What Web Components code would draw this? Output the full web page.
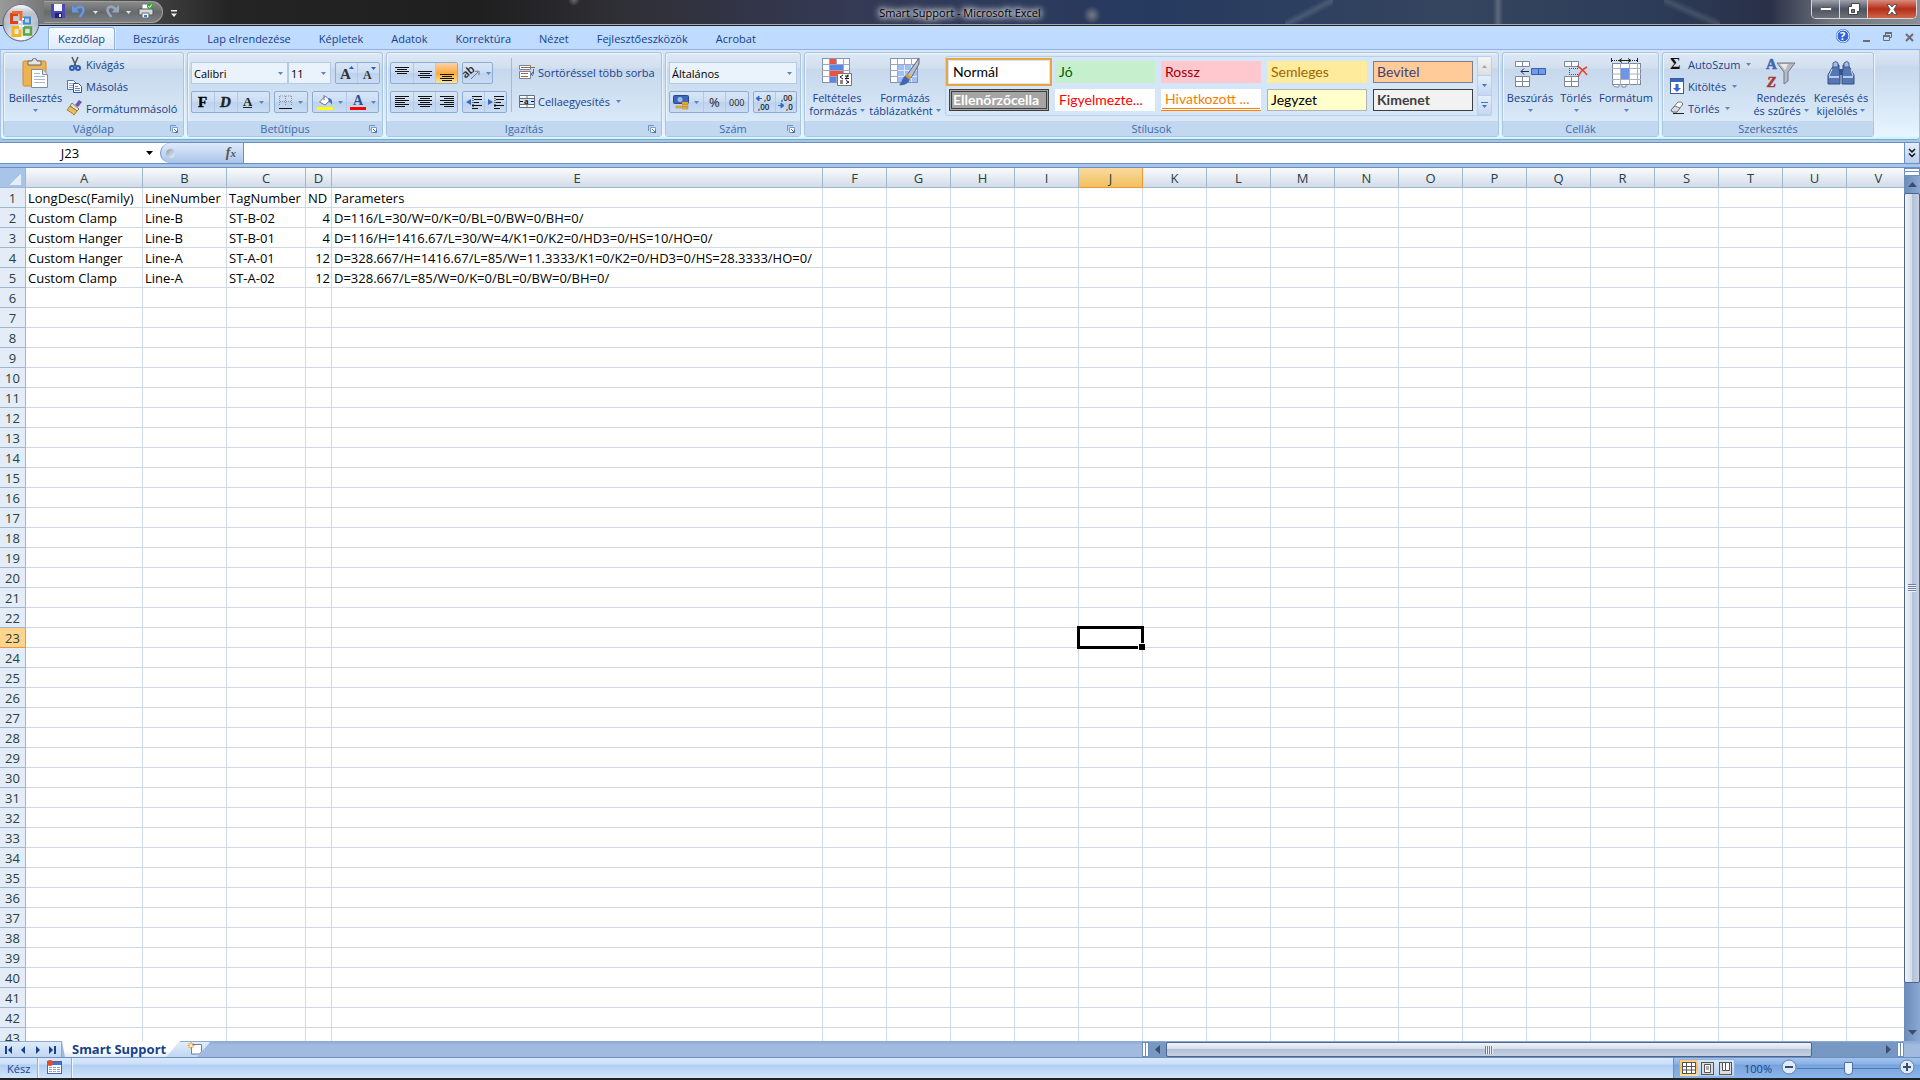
<!DOCTYPE html>
<html lang="hu">
<head>
<meta charset="utf-8">
<title>Smart Support - Microsoft Excel</title>
<style>
html, body {
  margin: 0;
  height: 100%;
  overflow: hidden;
}
body {
  --ui: "Open Sans", "Noto Sans", sans-serif;
  --style: Lato, "Liberation Sans", sans-serif;
  --ink: #15428b;
  font-family: var(--ui);
  font-size: 11px;
  color: var(--ink);
}
</style>
</head>
<body>
<excel-window>
  <title-bar slot="title">Smart Support - Microsoft Excel</title-bar>
  <ribbon-tabs slot="tabs"></ribbon-tabs>
  <ribbon-bar slot="ribbon"></ribbon-bar>
  <formula-bar slot="formula" cell="J23"></formula-bar>
  <sheet-grid rows="43" active="J23"></sheet-grid>
  <sheet-tabs slot="sheets">Smart Support</sheet-tabs>
  <status-bar slot="status">Kész</status-bar>
</excel-window>

<script>
const RESET = `
:host, * { box-sizing: border-box; }
button, input, select {
  margin: 0;
  padding: 0;
  border: 0;
  background: none;
  border-radius: 0;
  font: inherit;
  color: inherit;
  outline: 0 none;
  appearance: none;
}
`;

// name: [width, height, svg content]
const GRID = `<rect x=".5" y=".5" width="27" height="24" fill="#fdfdff" stroke="#8594ad"/>
  <path d="M.5 6.5h27M.5 12.5h27M.5 18.5h27M7.500.5v24M14.500.5v24M21.500.5v24" stroke="#9aa8c0" fill="none"/>`;
const ICONS = {
  down: [5, 3, '<path d="M0 0h5L2.500 3z" fill="currentColor"/>'],
  namedown: [7, 4, '<path d="M0 0h7L3.500 4z" fill="#000"/>'],
  save: [14, 14, '<path d="M0 0h14v14H1.500L0 12.500z" fill="#4b47b4"/><path d="M3 0h8v7H3z" fill="#f3f4ff"/><path d="M4 9h7v5H4z" fill="#23236d"/><path d="M8 10h2v3H8z" fill="#e8ecff"/>'],
  undo: [14, 14, '<path d="M3 6C6 1 12 2 11.500 6.500 11.200 9.500 9 11 7.500 13" fill="none" stroke="#6496ea" stroke-width="2.500"/><path d="M0 1v7.500h7.500z" fill="#6496ea"/>'],
  redo: [14, 14, '<path d="M11 6C8 1 2 2 2.500 6.500 2.800 9.500 5 11 6.500 13" fill="none" stroke="#98a6bd" stroke-width="2.500"/><path d="M14 1v7.500H6.500z" fill="#98a6bd"/>'],
  print: [16, 16, '<path d="M4 1h7v6H4z" fill="#fff" stroke="#777"/><path d="M1 6h14v6H1z" fill="#d5d8dd" stroke="#555"/><path d="M4 10h7v5H4z" fill="#eef5ff" stroke="#666"/><path d="M6 12h3v2H6z" fill="#3b82c8"/><circle cx="12" cy="3" r="3" fill="#3aa335"/><path d="M10.300 3l1.400 1.500 2-3" stroke="#fff" fill="none"/>'],
  qat: [6, 7, '<path d="M0 0h6v1.500H0zM0 3.500h6L3 7z" fill="#e8eefa"/>'],
  paste: [27, 30, '<rect x="1" y="3" width="23" height="25" rx="1.500" fill="#edb350" stroke="#c98d35"/><path d="M6 3h4q0-2.500 2.500-2.500T15 3h4v4H6z" fill="#e4e4e4" stroke="#666"/><path d="M9.500 11.500h11l5 5v13h-16z" fill="#fff" stroke="#7b8ca6"/><path d="M20.500 11.500v5h5" fill="#dce6f4" stroke="#7b8ca6"/><path d="M12 15.500h6M12 18.500h11M12 21.500h11M12 24.500h11" stroke="#a9b6ca"/>'],
  cut: [16, 16, '<path d="M5 1l4 9M11 1L7 10" stroke="#555" stroke-width="1.500" fill="none"/><circle cx="5" cy="12" r="2" fill="none" stroke="#2a59b0" stroke-width="2"/><circle cx="11" cy="12" r="2" fill="none" stroke="#2a59b0" stroke-width="2"/>'],
  copy: [16, 16, '<path d="M.5 2.500h6l3 3v6h-9z" fill="#fff" stroke="#4d72b8"/><path d="M2 5.500h4M2 7.500h5M2 9.500h5" stroke="#86a3d6"/><path d="M6.500 5.500h5l3 3v6h-8z" fill="#fff" stroke="#34549a"/><path d="M8 8.500h3M8 10.500h5M8 12.500h5" stroke="#5d83c8"/>'],
  painter: [16, 16, '<path d="M12 0l3 2-4 5-3-2z" fill="#6957b4"/><path d="M5 3l7 6-2 2-7-5z" fill="#e4e0d8" stroke="#8b7c60"/><path d="M3 6l7 5-3 4c-2-2-5-4-7-5z" fill="#e7bd62" stroke="#a87a29"/>'],
  grow: [14, 16, '<text x="0" y="14" font-family="Liberation Serif,serif" font-weight="bold" font-size="15" fill="#333">A</text><path d="M9 4h5l-2.500-3z" fill="#2b5fb3"/>'],
  shrink: [14, 16, '<text x="1" y="14" font-family="Liberation Serif,serif" font-weight="bold" font-size="12" fill="#333">A</text><path d="M9 2h5l-2.500 3z" fill="#2b5fb3"/>'],
  bold: [12, 16, '<text x="1" y="13" font-family="Liberation Serif,serif" font-weight="bold" font-size="15" fill="#000" stroke="#000" stroke-width=".4">F</text>'],
  italic: [12, 16, '<text x="0" y="13" font-family="Liberation Serif,serif" font-weight="bold" font-style="italic" font-size="15" fill="#222" stroke="#222" stroke-width=".4">D</text>'],
  under: [12, 16, '<text x="1" y="12" font-family="Liberation Serif,serif" font-weight="bold" font-size="13" fill="#222">A</text><path d="M1 13.500h9" stroke="#222"/>'],
  border: [14, 14, '<path d="M.5 1v10M6.500 1v10M12.500 1v10M1 1h12M1 6.500h12" stroke="#8a8f99" stroke-dasharray="1 1" fill="none"/><path d="M0 13.500h13" stroke="#111"/>'],
  fill: [16, 16, '<path d="M2.500 8l6-6 4.500 4.500-5 4.500z" fill="#fff" stroke="#6a7893"/><path d="M7 1v5" stroke="#6a7893"/><path d="M11 4q5 0 4 7-1-3-3-3z" fill="#3d6cbc"/><path d="M0 13h16v3H0z" fill="#ff0"/>'],
  color: [16, 16, '<text x="3" y="11" font-family="Liberation Serif,serif" font-weight="bold" font-size="14" fill="#2b4f94">A</text><path d="M0 13h16v3H0z" fill="red"/>'],
  top: [14, 15, '<path d="M0 1.500h14M2 3.500h10M0 5.500h14M2 7.500h10" stroke="#111"/>'],
  middle: [14, 15, '<path d="M0 5.500h14M2 7.500h10M0 9.500h14M2 11.500h10" stroke="#111"/>'],
  bottom: [14, 15, '<path d="M0 8.500h14M2 10.500h10M0 12.500h14M2 14.500h10" stroke="#111"/>'],
  left: [14, 14, '<path d="M0 1.500h14M0 3.500h10M0 5.500h14M0 7.500h10M0 9.500h14M0 11.500h10" stroke="#111"/>'],
  center: [14, 14, '<path d="M0 1.500h14M2 3.500h10M0 5.500h14M2 7.500h10M0 9.500h14M2 11.500h10" stroke="#111"/>'],
  right: [14, 14, '<path d="M0 1.500h14M4 3.500h10M0 5.500h14M4 7.500h10M0 9.500h14M4 11.500h10" stroke="#111"/>'],
  orient: [16, 14, '<text x="-1" y="9" transform="rotate(-40 5 9)" font-family="Open Sans,sans-serif" font-weight="600" font-size="11" fill="#222">ab</text><path d="M6 13l7-7M14 5l-4 .5M14 5v4" stroke="#777" fill="none"/>'],
  outdent: [16, 14, '<path d="M6 1.500h10M8 4.500h8M8 7.500h5M6 10.500h10M6 13.500h6" stroke="#111"/><path d="M7 1v13" stroke="#111" stroke-dasharray="1 1"/><path d="M5 4v6L0 7z" fill="#3668c0"/>'],
  indent: [16, 14, '<path d="M6 1.500h10M8 4.500h8M8 7.500h5M6 10.500h10M6 13.500h6" stroke="#111"/><path d="M7 1v13" stroke="#111" stroke-dasharray="1 1"/><path d="M0 4v6l5-3z" fill="#3668c0"/>'],
  wrap: [16, 16, '<path d="M.5 1.500h11v4H.5zM.5 7.500h11v7H.5z" fill="#fff" stroke="#7a8393"/><path d="M2 3.500h14M2 9.500h7M2 12.500h7" stroke="#a0673c"/><path d="M14.500 5v5H12M14 8l-2 2 2 2" stroke="#4c6da8" fill="none"/>'],
  merge: [16, 15, '<path d="M.5 1.500h15v12H.5z" fill="#fff" stroke="#62708a"/><path d="M8 1v3M8 11v3M.5 4.500h15M.5 10.500h15" stroke="#62708a"/><path d="M1 5h14v5H1z" fill="#cfe0f8"/><text x="5" y="10" font-family="Liberation Serif,serif" font-weight="bold" font-size="9" fill="#111">a</text><path d="M1 7.500h3M12 7.500h3" stroke="#111"/>'],
  money: [16, 16, '<rect x=".5" y="1.500" width="15" height="8" rx="1" fill="#3c67b8" stroke="#244b91"/><circle cx="7" cy="5.500" r="2.500" fill="#9db9e8"/><path d="M9 8h6v2H9zM9 10.500h6v2H9zM9 13h6v2H9zM3 12h5v2H3z" fill="#e9b83c" stroke="#b07c1c" stroke-width=".5"/>'],
  percent: [14, 14, '<text x="1" y="12" font-family="Open Sans,sans-serif" font-size="13" fill="#222">%</text>'],
  thousand: [16, 14, '<text x="0" y="11" font-family="Open Sans,sans-serif" font-size="9" fill="#222">000</text>'],
  moredec: [16, 15, '<text x="8" y="6" font-family="Open Sans,sans-serif" font-size="8" font-weight="600" fill="#222">,0</text><text x="2" y="15" font-family="Open Sans,sans-serif" font-size="8" font-weight="600" fill="#222">,00</text><path d="M0 3.500h6M3 1v5L0 3.500z" fill="#3668c0" stroke="#3668c0"/>'],
  lessdec: [16, 15, '<text x="3" y="6" font-family="Open Sans,sans-serif" font-size="8" font-weight="600" fill="#222">,00</text><text x="8" y="15" font-family="Open Sans,sans-serif" font-size="8" font-weight="600" fill="#222">,0</text><path d="M0 10.500h6M3 8v5l3-2.500z" fill="#3668c0" stroke="#3668c0"/>'],
  cond: [30, 30, GRID + '<path d="M8 1h6v5H8zM8 13h13v5H8z" fill="#f0513c"/><path d="M8 7h13v5H8zM8 19h6v5H8z" fill="#5b86e5"/><path d="M15.500 15.500h14v12h-14z" fill="#fff" stroke="#777"/><path d="M21 17l-3 2 3 2M18 23h3M18 25h3M23 18h4M23 20.500h4M26 16.500l-2 5M24 22.500l3 1.500-3 1.500" stroke="#111" fill="none"/>'],
  table: [30, 30, GRID + '<path d="M8 7h19v17H8z" fill="#89aef5" fill-opacity=".8"/><path d="M8 12.500h19M8 18.500h19M14.500 7v17M21.500 7v17" stroke="#dbe7ff"/><path d="M29 0l-12 17 4 3 8-14z" fill="#b8bec8" stroke="#636b78"/><path d="M16 17l4 4c-2 5-6 7-11 6 3-2 3-8 7-10z" fill="#3e68b4" /><path d="M17 16l4 3-1 3-5-4z" fill="#d89a3c"/>'],
  insert: [32, 28, '<path d="M1.500 2.500h14v5h-14zM8.500 2.500v5M1.500 17.500h14v10h-14zM8.500 17.500v10M1.500 22.500h14" fill="#fff" stroke="#7c889d"/><path d="M17.500 9.500h14v6h-14zM24.500 9.500v6" fill="#6f9bea" stroke="#3a5fa8"/><path d="M7 12.500h8M10 9.500l-3 3 3 3" stroke="#222e4c" fill="none"/>'],
  remove: [26, 28, '<path d="M1.500 2.500h14v5h-14zM8.500 2.500v5M1.500 17.500h14v10h-14zM8.500 17.500v10M1.500 22.500h14" fill="#fff" stroke="#7c889d"/><path d="M6 9.500h10M6 15.500h10M6.500 9v7" stroke="#334d88" stroke-dasharray="1 1"/><path d="M14 7c4 2 7 5 10 9M24 8c-4 2-7 5-9 10" stroke="#f0402c" stroke-width="1.500" fill="none"/>'],
  format: [31, 30, '<rect x="1.500" y="5.500" width="28" height="21" fill="#fff" stroke="#7c889d"/><path d="M1 10.500h29M1 21.500h29M9.500 5v22M18.500 5v22M26.500 5v22M1 16h29" stroke="#a5b0c4"/><path d="M10 10h8v11h-8z" fill="#6f95e3"/><path d="M1 2.500h25" stroke="#222" stroke-dasharray="1 1"/><path d="M9 2.500h10M.5 0v4M26.500 0v4M17 .5l3 2-3 2M11 .5l-3 2 3 2" stroke="#222" fill="none"/><path d="M2 27q0 2 4 2h2v-2M11 27v2h4v-2" stroke="#7c889d" fill="#fff"/>'],
  sum: [14, 14, '<text x="0" y="12" font-family="Liberation Serif,serif" font-weight="bold" font-size="16" fill="#111">Σ</text>'],
  filldown: [14, 16, '<rect x=".5" y=".5" width="13" height="15" fill="#fff" stroke="#3c5a96"/><path d="M1 1h12v3H1z" fill="#3668c0"/><path d="M5.500 6h3v4H11l-4 4-4-4h2.500z" fill="#3568d4"/>'],
  erase: [14, 14, '<path d="M1 9l7-8q4-1 5 2L7 11H3q-2 0-2-2z" fill="#fff" stroke="#777"/><path d="M1 9l4-4 5 2-3 4H3z" fill="#d6dbe4" stroke="#777"/><path d="M3 12.500h11" stroke="#222"/>'],
  sort: [30, 30, '<text x="0" y="11" font-family="Liberation Serif,serif" font-weight="bold" font-size="15" fill="#4068ae" stroke="#4068ae" stroke-width=".5">A</text><text x="1" y="29" font-family="Liberation Serif,serif" font-weight="bold" font-style="italic" font-size="15" fill="#a53a38" stroke="#a53a38" stroke-width=".5">Z</text><path d="M11 5h18l-7 9v9l-4 3V14z" fill="#b7bac0" stroke="#77797e"/><path d="M14 6h8l-3 6z" fill="#e8e9ec"/>'],
  find: [28, 26, '<path d="M8 4l4 1v4l1 6v9H1v-9l4-7zM20 4l-4 1v4l-1 6v9h12v-9l-4-7z" fill="#5578b4" stroke="#31507f"/><path d="M6 3q3-3 5 0v4H6zM17 3q3-3 5 0v4h-5z" fill="#a7bfe4" stroke="#3f5d90"/><path d="M12 9h4v6h-4z" fill="#34548c"/><path d="M2 17h10M16 17h10" stroke="#b7cbea" stroke-width="2"/><path d="M5 9l-3 7M24 9l2 7" stroke="#cfdef5"/>'],
  launch: [8, 8, '<path d="M.5 6V.5H6" stroke="#6d92c4" fill="none"/><path d="M2.500 2.500h5v5h-5z" fill="#fff" stroke="#7f9fcb"/><path d="M4 4l3.500 3.500M7.500 4.500v3h-3" stroke="#4a74b0" fill="none"/>'],
  help: [14, 14, '<circle cx="7" cy="7" r="7" fill="#2b5cc8"/><circle cx="7" cy="7" r="6" fill="#2f66dd" stroke="#fff"/><text x="4" y="11" font-family="Open Sans,sans-serif" font-weight="bold" font-size="11" fill="#fff">?</text>'],
  min: [7, 10, '<path d="M0 8h7v2H0z" fill="#6d6d6d"/>'],
  restore: [9, 10, '<path d="M2.500 4V1.500h6v4H7" stroke="#6d6d6d" fill="none"/><path d="M2 1h7M0 4h7" stroke="#6d6d6d" stroke-width="2"/><path d="M.5 4.500h6v4h-6z" stroke="#6d6d6d" fill="none"/>'],
  close: [9, 9, '<path d="M1 1l7 7M8 1L1 8" stroke="#6d6d6d" stroke-width="2"/>'],
  winmin: [12, 5, '<rect x=".5" y=".5" width="11" height="3" rx="1" fill="#fff" stroke="#555"/>'],
  winrest: [12, 12, '<path d="M3.500.5h8v8h-2v3h-9v-8h3z" fill="#fff" stroke="#444"/><path d="M3.500 6.500h3v3h-3z" fill="#777" stroke="#444"/>'],
  winclose: [12, 11, '<path d="M1 .5h3l2 2.500L8 .5h3L8 5.500l3 5H8L6 8l-2 2.500H1l3-5z" fill="#fff" stroke="#555"/>'],
  first: [8, 8, '<path d="M0 0h2v8H0zM7 0v8L3 4z" fill="#15428b"/>'],
  prev: [8, 8, '<path d="M6 0v8L2 4z" fill="#15428b"/>'],
  next: [8, 8, '<path d="M2 0v8l4-4z" fill="#15428b"/>'],
  last: [8, 8, '<path d="M1 0v8l4-4zM6 0h2v8H6z" fill="#15428b"/>'],
  newsheet: [15, 13, '<path d="M4.500 2.500h10v7l-2 2.500h-8z" fill="#fff" stroke="#6b7f9f"/><path d="M4 0v7M.5 3.500h7M1.500 1l5 5M6.500 1l-5 5" stroke="#ef9a28"/><circle cx="4" cy="3.500" r="1.500" fill="#fff3b5"/>'],
  macro: [15, 14, '<rect x=".5" y="1.500" width="14" height="12" fill="#fff" stroke="#49659b"/><path d="M1 2h13v3H1z" fill="#4272d0"/><path d="M2 7.500h11M2 9.500h11M2 11.500h11" stroke="#93a4c2" stroke-dasharray="3 1"/><circle cx="3" cy="3" r="3" fill="#dc4d32"/>'],
  vnormal: [14, 12, '<rect x=".5" y=".5" width="13" height="11" fill="#fff" stroke="#555"/><path d="M0 4.500h14M0 8H14M4.500 0v12M9.500 0v12" stroke="#555"/>'],
  vlayout: [13, 13, '<rect x=".5" y=".5" width="12" height="12" fill="#ddd" stroke="#555"/><path d="M3.500 2.500h6v8h-6z" fill="#fff" stroke="#555"/><path d="M5 5h3M5 7h3" stroke="#555"/>'],
  vbreak: [13, 13, '<rect x=".5" y=".5" width="12" height="12" fill="#ddd" stroke="#555"/><path d="M3.500.5h3v8h-3zM6.500.5h4v8h-4z" fill="#fff" stroke="#555"/>'],
  chevrons: [8, 10, '<path d="M1 1l3 3 3-3M1 5.500l3 3 3-3" stroke="#111" stroke-width="1.500" fill="none"/>'],
  tri: [9, 5, '<path d="M0 0h9L4.500 5z" fill="#3c4d6e"/>'],
  triup: [9, 5, '<path d="M0 5h9L4.500 0z" fill="#3c4d6e"/>'],
  trileft: [5, 9, '<path d="M5 0v9L0 4.500z" fill="#3c4d6e"/>'],
  triright: [5, 9, '<path d="M0 0v9l5-4.500z" fill="#3c4d6e"/>'],
  minus: [16, 16, '<circle cx="8" cy="8" r="7" fill="#dfeafa" stroke="#5b7fb5"/><path d="M4 8h8" stroke="#3a4c70" stroke-width="2"/>'],
  plus: [16, 16, '<circle cx="8" cy="8" r="7" fill="#dfeafa" stroke="#5b7fb5"/><path d="M4 8h8M8 4v8" stroke="#3a4c70" stroke-width="2"/>'],
  orb: [38, 38, `<defs>
    <radialGradient id="o" cx=".5" cy=".9" r=".9"><stop offset="0" stop-color="#fff"/><stop offset=".5" stop-color="#c3cbd9"/><stop offset="1" stop-color="#8790a3"/></radialGradient>
    <linearGradient id="g" x1="0" y1="0" x2="0" y2="1"><stop offset="0" stop-color="#fdfdfe"/><stop offset=".5" stop-color="#c8cdd8" stop-opacity=".6"/><stop offset="1" stop-color="#fff" stop-opacity="0"/></linearGradient></defs>
    <circle cx="19" cy="19" r="18" fill="url(#o)" stroke="#596273"/><path d="M2 18a17 17 0 0 1 34 0q-17 5-34 0z" fill="url(#g)"/>
    <g fill="none" stroke-width="3"><path d="M16 10.500H9.500v8H16" stroke="#d8441c"/><path d="M10 8.500h9v8" stroke="#ee6a2a"/>
    <path d="M22 13.500h6v6h-6z" stroke="#3b8bd8" stroke-width="2"/><path d="M17 23.500h-6v8h7v-6" stroke="#f5b31c"/><path d="M22 23.500h7v7h-7z" stroke="#5da63c" stroke-width="2.500"/></g>
    <path d="M17 17h2v2h-2zM20 14h2v2h-2zM20 21h2v2h-2zM17 21h2v2h-2z" fill="#fff"/>`]
};

function shadow(el, html) {
  const t = document.createElement('template');
  t.innerHTML = `<style>${RESET}</style>${html}`;
  el.attachShadow({ mode: 'open' }).appendChild(t.content.cloneNode(true));
  return el.shadowRoot;
}

class UiIcon extends HTMLElement {
  connectedCallback() {
    if (this.shadowRoot) return;
    const [w, h, body] = ICONS[this.getAttribute('name')];
    shadow(this, `
<style>
:host { display: inline-block; flex: none; }
svg { display: block; overflow: visible; }
</style>
<svg width="${w}" height="${h}" viewBox="0 0 ${w} ${h}" aria-hidden="true">${body}</svg>`);
  }
}

class ExcelWindow extends HTMLElement {
  constructor() {
    super();
    shadow(this, `
<style>
:host {
  display: grid;
  grid-template-rows: auto auto auto auto minmax(0, 1fr) auto auto;
  grid-template-columns: minmax(0, 1fr);
  height: 100vh;
  background: #a9c4e9;
}
</style>
<slot name="title"></slot>
<slot name="tabs"></slot>
<slot name="ribbon"></slot>
<slot name="formula"></slot>
<slot></slot>
<slot name="sheets"></slot>
<slot name="status"></slot>`);
  }
}

class TitleBar extends HTMLElement {
  constructor() {
    super();
    shadow(this, `
<style>
:host {
  display: grid;
  grid-template-columns: 1fr auto 1fr;
  position: relative;
  z-index: 2;
  height: 26px;
  border-bottom: 1px solid #17202f;
  box-shadow: inset 0 -1px #a9a9a4;
  color: #000;
  background:
    radial-gradient(circle at 1092px 15px, #a9a49c99 0, transparent 9px),
    radial-gradient(circle at 574px 0, #8a8a90aa 0, transparent 6px),
    radial-gradient(ellipse at 1750px 10px, #857570aa 0, transparent 14px),
    linear-gradient(to bottom right, transparent 38%, #7d909c55 50%, transparent 62%) 1285px 0 / 48px 25px no-repeat,
    linear-gradient(90deg, transparent, #8f95a077, transparent) 1493px 0 / 10px 25px no-repeat,
    linear-gradient(to bottom left, transparent 38%, #6f868e55 50%, transparent 62%) 1664px 0 / 56px 25px no-repeat,
    linear-gradient(90deg, #9a9a9a 0, #6a6a6a 60px, #3a3a3a 170px, #242425 230px, #1f1f20 480px, #2f2f36 620px, #353a55 850px, #263a60 1150px, #35455f 1450px, #2d3c58 1650px, #2a3048 1770px, #70747d 1830px, #8a8e97 100%);
}
.quick {
  display: flex;
  align-items: center;
  align-self: start;
  gap: 8px;
  height: 24px;
  padding-left: 44px;
}
.pill {
  display: flex;
  align-items: center;
  gap: 7px;
  height: 22px;
  padding: 0 8px 0 7px;
  border: 1px solid #a0a0a0;
  border-left: 0;
  border-radius: 0 12px 12px 0;
  background: linear-gradient(#8a8a8a, #666a6c 50%, #7c8082);
  color: #dfe6f2;
}
.pill button { display: block; }
h1 {
  margin: 0;
  align-self: center;
  font-size: 11px;
  font-weight: normal;
  text-shadow: 0 0 4px #eee, 0 0 6px #eee, 0 0 8px #ddd, 0 0 10px #ddd;
}
.controls {
  justify-self: end;
  align-self: start;
  display: flex;
  height: 19px;
  margin-right: 3px;
  border: 1px solid #d5d7dc;
  border-top: 0;
  border-radius: 0 0 5px 5px;
  overflow: hidden;
}
.controls button {
  display: flex;
  align-items: center;
  justify-content: center;
  width: 28px;
  border-right: 1px solid #d5d7dc;
  background: linear-gradient(#a0a3ac, #4d5361 50%, #6c7079);
}
.controls .close {
  width: 48px;
  border-right: 0;
  background: linear-gradient(#d98b7c, #b52d17 50%, #d0664c);
}
.orb {
  position: absolute;
  left: 2px;
  top: 4px;
}
</style>
<div class="quick">
  <div class="pill">
    <button aria-label="Mentés"><ui-icon name="save"></ui-icon></button>
    <button aria-label="Visszavonás"><ui-icon name="undo"></ui-icon></button><ui-icon name="down"></ui-icon>
    <button aria-label="Ismét"><ui-icon name="redo"></ui-icon></button><ui-icon name="down"></ui-icon>
    <button aria-label="Gyorsnyomtatás"><ui-icon name="print"></ui-icon></button>
  </div>
  <button aria-label="Testreszabás"><ui-icon name="qat"></ui-icon></button>
</div>
<h1><slot></slot></h1>
<div class="controls">
  <button aria-label="Kis méret"><ui-icon name="winmin"></ui-icon></button>
  <button aria-label="Előző méret"><ui-icon name="winrest"></ui-icon></button>
  <button class="close" aria-label="Bezárás"><ui-icon name="winclose"></ui-icon></button>
</div>
<button class="orb" aria-label="Office gomb"><ui-icon name="orb"></ui-icon></button>`);
  }
}

class RibbonTabs extends HTMLElement {
  constructor() {
    super();
    const tabs = ['Kezdőlap', 'Beszúrás', 'Lap elrendezése', 'Képletek', 'Adatok', 'Korrektúra', 'Nézet', 'Fejlesztőeszközök', 'Acrobat'];
    shadow(this, `
<style>
:host {
  display: flex;
  justify-content: space-between;
  height: 24px;
  padding: 0 6px 0 48px;
  background: #bfdbff;
  border-bottom: 1px solid #8db2e3;
}
nav {
  display: flex;
  gap: 8px;
  padding-top: 1px;
}
.tab {
  height: 22px;
  padding: 0 9px;
  border: 1px solid transparent;
  border-bottom: 0;
  line-height: 22px;
}
.tab[aria-selected=true] {
  border-color: #8db2e3;
  border-radius: 3px 3px 0 0;
  background: linear-gradient(#f7fbff, #dfeafa);
  box-shadow: inset 1px 1px #fff, 1px 0 #d7f5ff;
}
.tools {
  display: flex;
  align-items: center;
  gap: 13px;
}
button { display: block; }
</style>
<nav role="tablist">${tabs.map((t, i) => `<button class="tab" role="tab" aria-selected="${i === 0}">${t}</button>`).join('')}</nav>
<div class="tools">
  <button aria-label="Súgó"><ui-icon name="help"></ui-icon></button>
  <button aria-label="Kis méret"><ui-icon name="min"></ui-icon></button>
  <button aria-label="Előző méret"><ui-icon name="restore"></ui-icon></button>
  <button aria-label="Bezárás"><ui-icon name="close"></ui-icon></button>
</div>`);
  }
}

class RibbonGroup extends HTMLElement {
  constructor() {
    super();
    shadow(this, `
<style>
:host {
  display: flex;
  flex-direction: column;
  flex: none;
  border: 1px solid #a7c4e2;
  border-radius: 3px;
  background: linear-gradient(#dee8f5, #d1dfef 15px, #c7d8ed 16px, #d9e9f8 68px);
  box-shadow: inset 1px 1px #eef4fb, 1px 1px #e9f4fe;
}
.body {
  display: flex;
  height: 68px;
}
footer {
  display: flex;
  align-items: center;
  height: 15px;
  padding: 0 5px 0 13px;
  background: #c1d8f0;
  color: #3e6aaa;
}
.name {
  flex: 1;
  text-align: center;
  line-height: 15px;
}
button { width: 8px; }
:host(:not([launch])) button { visibility: hidden; }
</style>
<div class="body"><slot></slot></div>
<footer><span class="name"></span><button aria-label="Párbeszédpanel"><ui-icon name="launch"></ui-icon></button></footer>`);
  }
  connectedCallback() {
    this.shadowRoot.querySelector('.name').textContent = this.getAttribute('label');
  }
}

class RibbonLarge extends HTMLElement {
  connectedCallback() {
    if (this.shadowRoot) return;
    shadow(this, `
<style>
:host { display: block; flex: none; }
button {
  display: flex;
  flex-direction: column;
  align-items: center;
  width: 100%;
}
.pic {
  display: flex;
  align-items: center;
  height: 36px;
  margin-top: 2px;
}
.text {
  line-height: 13px;
  text-align: center;
  white-space: nowrap;
}
.text ui-icon {
  color: #5c86bf;
  vertical-align: 3px;
}
</style>
<button>
  <span class="pic"><ui-icon name="${this.getAttribute('icon')}"></ui-icon></span>
  <span class="text"><slot></slot> <ui-icon name="down"></ui-icon></span>
</button>`);
  }
}

class RibbonSmall extends HTMLElement {
  connectedCallback() {
    if (this.shadowRoot) return;
    shadow(this, `
<style>
:host { display: block; }
button {
  display: flex;
  align-items: center;
  gap: 3px;
  height: 22px;
  white-space: nowrap;
}
.pic {
  display: flex;
  justify-content: center;
  width: 16px;
}
.drop {
  margin-left: 3px;
  color: #5c86bf;
}
</style>
<button>
  <span class="pic"><ui-icon name="${this.getAttribute('icon')}"></ui-icon></span>
  <slot></slot>${this.hasAttribute('drop') ? '<ui-icon class="drop" name="down"></ui-icon>' : ''}
</button>`);
  }
}

// a framed row of icon buttons; each item is "icon:width", + marks a drop-down, * the pressed one
class ToolStrip extends HTMLElement {
  connectedCallback() {
    if (this.shadowRoot) return;
    const items = this.getAttribute('items').split(' ').map(s => {
      const [name, width] = s.replace(/[+*]/g, '').split(':');
      return `<button class="${s.includes('*') ? 'on' : ''}" style="flex-basis:${width}px" aria-label="${name}"><ui-icon name="${name}"></ui-icon>${s.includes('+') ? '<ui-icon class="drop" name="down"></ui-icon>' : ''}</button>`;
    });
    shadow(this, `
<style>
:host {
  display: flex;
  height: 22px;
  border: 1px solid #8cadd8;
  border-radius: 2px;
  background: linear-gradient(#d9e6f7, #cbdcf2 49%, #bdd2ee 50%, #c9dcf4);
}
button {
  display: flex;
  align-items: center;
  justify-content: center;
  gap: 5px;
  flex: 1 1 0;
}
button + button { border-left: 1px solid #b3c9e6; }
.on { background: linear-gradient(#fbd3a0, #fbb35c 40%, #fca938 50%, #fde68c); }
.drop { color: #5c86bf; }
</style>
${items.join('')}`);
  }
}

class RibbonSelect extends HTMLElement {
  connectedCallback() {
    if (this.shadowRoot) return;
    shadow(this, `
<style>
:host { display: block; }
label {
  display: flex;
  align-items: center;
  height: 22px;
  padding: 0 4px 0 2px;
  border: 1px solid #b3cbe8;
  background: #eaf2fb;
  color: #000;
}
select {
  flex: 1;
  min-width: 0;
  height: 20px;
}
ui-icon { color: #5c86bf; }
</style>
<label><select aria-label="${this.getAttribute('label')}"><option>${this.getAttribute('value')}</option></select><ui-icon name="down"></ui-icon></label>`);
  }
}

class StyleGallery extends HTMLElement {
  constructor() {
    super();
    shadow(this, `
<style>
:host {
  display: flex;
  width: 547px;
  height: 60px;
  border: 1px solid #b9d0ed;
  border-radius: 2px;
  background: #d4e6f8;
  font: 14px/20px var(--style);
}
.list {
  flex: 1;
  display: grid;
  grid-template-columns: repeat(5, 100px);
  gap: 6px;
  padding: 4px 3px;
}
.list button {
  height: 22px;
  padding: 0 3px;
  border: 1px solid transparent;
  text-align: left;
  white-space: nowrap;
}
.normal {
  background: #fff;
  color: #000;
  outline: 2px solid #eaa63c;
  outline-offset: 1px;
}
.good { background: #c6efce; color: #006100; }
.bad { background: #ffc7ce; color: #9c0006; }
.neutral { background: #ffeb9c; color: #9c6500; }
.list .input { background: #ffcc99; color: #3f3f76; border-color: #7f7f7f; }
.list .check {
  background: #a5a5a5;
  color: #fff;
  font-weight: bold;
  border: 3px double #3f3f3f;
  padding: 0 1px;
  line-height: 14px;
}
.warn { background: #fff; color: #f00; }
.list .link { background: #fff; color: #fa7d00; border-bottom: 3px double #ff8001; line-height: 18px; }
.list .note { background: #ffffcc; color: #000; border-color: #b2b2b2; }
.list .output { background: #f2f2f2; color: #3f3f3f; border-color: #3f3f3f; font-weight: bold; }
.scroll {
  display: flex;
  flex-direction: column;
  width: 14px;
  border-left: 1px solid #b9d0ed;
}
.scroll button {
  flex: 1;
  display: flex;
  flex-direction: column;
  gap: 2px;
  align-items: center;
  justify-content: center;
  border-bottom: 1px solid #b9d0ed;
  color: #4a77bb;
  background: linear-gradient(#e4effc, #c3d8f2);
}
.scroll .up {
  color: #a5a5a5;
  background: linear-gradient(#f4f4f4, #dcdfe2);
}
.up ui-icon { transform: rotate(180deg); }
.more::before {
  content: "";
  width: 7px;
  border-top: 1px solid #4a77bb;
}
</style>
<div class="list">
  <button class="normal">Normál</button>
  <button class="good">Jó</button>
  <button class="bad">Rossz</button>
  <button class="neutral">Semleges</button>
  <button class="input">Bevitel</button>
  <button class="check">Ellenőrzőcella</button>
  <button class="warn">Figyelmezte...</button>
  <button class="link">Hivatkozott ...</button>
  <button class="note">Jegyzet</button>
  <button class="output">Kimenet</button>
</div>
<div class="scroll">
  <button class="up" aria-label="Fel"><ui-icon name="down"></ui-icon></button>
  <button aria-label="Le"><ui-icon name="down"></ui-icon></button>
  <button class="more" aria-label="Egyebek"><ui-icon name="down"></ui-icon></button>
</div>`);
  }
}

class RibbonBar extends HTMLElement {
  constructor() {
    super();
    shadow(this, `
<style>
:host {
  display: flex;
  gap: 3px;
  height: 90px;
  margin: 0 1px 2px;
  padding: 2px 2px 0;
  border-bottom: 1px solid #7ba9c8;
  border-radius: 0 0 3px 3px;
  background: linear-gradient(#dbe6f4, #cfddee 14px, #c7d8ed 17px, #e7f5ff 86px, #c0f4ff);
}
ribbon-group { height: 85px; }
.stack { display: flex; flex-direction: column; }
.rows {
  display: flex;
  flex-direction: column;
  gap: 7px;
  padding: 9px 0 0 3px;
}
.row { display: flex; gap: 4px; }
.row.tight { gap: 0; }
.texts {
  display: flex;
  flex-direction: column;
  gap: 7px;
  margin: 5px 0 0 4px;
  padding: 3px 0 2px 7px;
  border-left: 1px solid #9ebbe0;
  height: 54px;
}
style-gallery { margin: 3px 0 0 4px; }
</style>
<ribbon-group label="Vágólap" launch style="width:181px">
  <ribbon-large icon="paste" style="width:63px">Beillesztés<br></ribbon-large>
  <div class="stack">
    <ribbon-small icon="cut">Kivágás</ribbon-small>
    <ribbon-small icon="copy">Másolás</ribbon-small>
    <ribbon-small icon="painter">Formátummásoló</ribbon-small>
  </div>
</ribbon-group>
<ribbon-group label="Betűtípus" launch style="width:196px">
  <div class="rows">
    <div class="row">
      <div class="row tight">
        <ribbon-select label="Betűtípus" value="Calibri" style="width:97px"></ribbon-select>
        <ribbon-select label="Betűméret" value="11" style="width:43px"></ribbon-select>
      </div>
      <tool-strip items="grow:22 shrink:22" style="width:45px"></tool-strip>
    </div>
    <div class="row">
      <tool-strip items="bold:22 italic:22 under+:32" style="width:79px"></tool-strip>
      <tool-strip items="border+:33" style="width:34px"></tool-strip>
      <tool-strip items="fill+:33 color+:32" style="width:67px"></tool-strip>
    </div>
  </div>
</ribbon-group>
<ribbon-group label="Igazítás" launch style="width:276px">
  <div class="rows">
    <div class="row">
      <tool-strip items="top:22 middle:22 bottom*:22" style="width:68px"></tool-strip>
      <tool-strip items="orient+:30" style="width:31px"></tool-strip>
    </div>
    <div class="row">
      <tool-strip items="left:22 center:22 right:22" style="width:68px"></tool-strip>
      <tool-strip items="outdent:22 indent:22" style="width:45px"></tool-strip>
    </div>
  </div>
  <div class="texts">
    <ribbon-small icon="wrap">Sortöréssel több sorba</ribbon-small>
    <ribbon-small icon="merge" drop>Cellaegyesítés</ribbon-small>
  </div>
</ribbon-group>
<ribbon-group label="Szám" launch style="width:136px">
  <div class="rows">
    <ribbon-select label="Számformátum" value="Általános" style="width:128px"></ribbon-select>
    <div class="row">
      <tool-strip items="money+:32 percent:22 thousand:22" style="width:80px"></tool-strip>
      <tool-strip items="moredec:22 lessdec:22" style="width:44px"></tool-strip>
    </div>
  </div>
</ribbon-group>
<ribbon-group label="Stílusok" style="width:695px">
  <ribbon-large icon="cond" style="width:64px">Feltételes<br>formázás</ribbon-large>
  <ribbon-large icon="table" style="width:72px">Formázás<br>táblázatként</ribbon-large>
  <style-gallery></style-gallery>
</ribbon-group>
<ribbon-group label="Cellák" style="width:157px">
  <ribbon-large icon="insert" style="width:54px">Beszúrás<br></ribbon-large>
  <ribbon-large icon="remove" style="width:38px">Törlés<br></ribbon-large>
  <ribbon-large icon="format" style="width:62px">Formátum<br></ribbon-large>
</ribbon-group>
<ribbon-group label="Szerkesztés" style="width:212px">
  <div class="stack" style="width:86px;padding-left:6px">
    <ribbon-small icon="sum" drop>AutoSzum</ribbon-small>
    <ribbon-small icon="filldown" drop>Kitöltés</ribbon-small>
    <ribbon-small icon="erase" drop>Törlés</ribbon-small>
  </div>
  <ribbon-large icon="sort" style="width:64px">Rendezés<br>és szűrés</ribbon-large>
  <ribbon-large icon="find" style="width:56px">Keresés és<br>kijelölés</ribbon-large>
</ribbon-group>`);
  }
}

class FormulaBar extends HTMLElement {
  constructor() {
    super();
    shadow(this, `
<style>
:host {
  display: flex;
  height: 22px;
  margin-bottom: 3px;
  border: solid #6b8fbe;
  border-width: 1px 0;
  background: #fff;
  font-size: 13px;
  line-height: 20px;
  color: #000;
}
.name {
  display: flex;
  align-items: center;
  width: 160px;
  padding: 0 7px 0 0;
}
.name input {
  flex: 1;
  min-width: 0;
  padding-right: 6px;
  text-align: center;
}
.fx {
  display: flex;
  align-items: center;
  justify-content: space-between;
  width: 84px;
  padding: 0 7px 0 5px;
  border: solid #6b8fbe;
  border-width: 0 1px;
  border-radius: 12px 0 0 12px;
  background: linear-gradient(#dfeafa, #a9c4ea);
}
.knob {
  width: 9px;
  height: 9px;
  border-radius: 50%;
  background: linear-gradient(135deg, #8f9bb0, #eef4fc);
}
.fx button {
  font: italic bold 14px/18px "Liberation Serif", serif;
  color: #555;
}
.fx small { font-size: 11px; }
.formula { flex: 1; padding: 0 4px; }
.expand {
  display: flex;
  align-items: center;
  justify-content: center;
  width: 16px;
  border: 1px solid #6b8fbe;
  border-width: 0 1px;
  background: linear-gradient(#e4eefb, #b9d0ef);
}
</style>
<label class="name"><input aria-label="Név mező" value="${this.getAttribute('cell')}"><ui-icon name="namedown"></ui-icon></label>
<div class="fx"><span class="knob"></span><button aria-label="Függvény beszúrása">f<small>x</small></button></div>
<input class="formula" aria-label="Szerkesztőléc">
<button class="expand" aria-label="Kibontás"><ui-icon name="chevrons"></ui-icon></button>`);
  }
}

class SheetGrid extends HTMLElement {
  constructor() {
    super();
    this.widths = [117, 84, 79, 26, 491];
    this.data = [
      ['LongDesc(Family)', 'LineNumber', 'TagNumber', 'ND', 'Parameters'],
      ['Custom Clamp', 'Line-B', 'ST-B-02', 4, 'D=116/L=30/W=0/K=0/BL=0/BW=0/BH=0/'],
      ['Custom Hanger', 'Line-B', 'ST-B-01', 4, 'D=116/H=1416.67/L=30/W=4/K1=0/K2=0/HD3=0/HS=10/HO=0/'],
      ['Custom Hanger', 'Line-A', 'ST-A-01', 12, 'D=328.667/H=1416.67/L=85/W=11.3333/K1=0/K2=0/HD3=0/HS=28.3333/HO=0/'],
      ['Custom Clamp', 'Line-A', 'ST-A-02', 12, 'D=328.667/L=85/W=0/K=0/BL=0/BW=0/BH=0/']
    ];
    shadow(this, `
<style>
:host {
  display: flex;
  min-height: 0;
  border-top: 1px solid #6b8fbe;
  background: #fff;
  color: #000;
  font-size: 13px;
  line-height: 18px;
}
.view {
  flex: 1;
  min-width: 0;
  overflow: hidden;
}
table {
  table-layout: fixed;
  width: 0;
  border-collapse: separate;
  border-spacing: 0;
}
th, td {
  height: 20px;
  padding: 0 1px 0 2px;
  border: solid #d0d7e5;
  border-width: 0 1px 1px 0;
  white-space: nowrap;
  overflow: hidden;
}
th {
  padding: 0;
  border-color: #9eb6ce;
  background: #e4ecf7;
  font-weight: normal;
  color: #27413e;
}
thead th { background: linear-gradient(#f9fcfd, #d3dbe9); }
thead th.on { background: linear-gradient(#f9d99f, #f1c15f); border-color: #f29536; }
tbody th.on { background: #ffd58d; border-color: #f29536; }
thead .corner {
  background: linear-gradient(135deg, transparent 67%, #e6edf7 67%) 2px 2px / 19px 15px no-repeat, #a9c4e9;
}
.num { text-align: right; }
.sel {
  position: relative;
  overflow: visible;
}
.sel::before {
  content: "";
  position: absolute;
  inset: -2px;
  border: 3px solid #000;
}
.sel::after {
  content: "";
  position: absolute;
  right: -3px;
  bottom: -3px;
  width: 6px;
  height: 6px;
  background: #000;
  border: solid #fff;
  border-width: 1px 0 0 1px;
}
</style>
<div class="view"><table><colgroup></colgroup><thead></thead><tbody></tbody></table></div>
<scroll-track vertical></scroll-track>`);
  }
  connectedCallback() {
    const root = this.shadowRoot;
    const active = this.getAttribute('active');
    const cols = [...'ABCDEFGHIJKLMNOPQRSTUV'];
    const on = (a, b) => a === String(b) ? ' class="on"' : '';
    const aCol = active.replace(/\d/g, '');
    const aRow = active.replace(/\D/g, '');
    root.querySelector('colgroup').innerHTML = '<col style="width:26px">' +
      cols.map((c, i) => `<col style="width:${this.widths[i] || 64}px">`).join('');
    root.querySelector('thead').innerHTML = '<tr><th class="corner"></th>' +
      cols.map(c => `<th scope="col"${on(aCol, c)}>${c}</th>`).join('') + '</tr>';
    let html = '';
    for (let r = 1; r <= +this.getAttribute('rows'); r++) {
      html += `<tr><th scope="row"${on(aRow, r)}>${r}</th>` + cols.map((c, i) => {
        const v = (this.data[r - 1] || [])[i] ?? '';
        const cls = c + r === active ? 'sel' : typeof v === 'number' ? 'num' : '';
        return `<td class="${cls}">${v}</td>`;
      }).join('') + '</tr>';
    }
    root.querySelector('tbody').innerHTML = html;
  }
}

class ScrollTrack extends HTMLElement {
  connectedCallback() {
    if (this.shadowRoot) return;
    const v = this.hasAttribute('vertical');
    shadow(this, `
<style>
:host {
  display: flex;
  background: #7898c4;
}
:host([vertical]) {
  flex-direction: column;
  width: 16px;
  background: linear-gradient(90deg, #6b8cba, #8aa9d3);
}
.split {
  flex: none;
  width: 7px;
  border: 1px solid #6b8fbe;
  background: linear-gradient(90deg, #fff 2px, #6b8fbe 2px 3px, #fff 3px);
}
:host([vertical]) .split {
  width: auto;
  height: 8px;
  background: linear-gradient(#fff 2px, #6b8fbe 2px 3px, #fff 3px);
}
.arrow {
  flex: none;
  display: flex;
  align-items: center;
  justify-content: center;
  width: 17px;
}
:host([vertical]) .arrow {
  width: auto;
  height: 17px;
}
.thumb {
  display: flex;
  align-items: center;
  justify-content: center;
  flex: 643;
  border: 1px solid #4d648c;
  border-radius: 2px;
  background: linear-gradient(#f0f4fa, #d3dce9 49%, #b2c0d5 50%, #c6d2e4);
}
:host([vertical]) .thumb {
  flex: 789;
  background: linear-gradient(90deg, #f0f4fa, #d3dce9 49%, #b2c0d5 50%, #c6d2e4);
}
.grip {
  width: 8px;
  height: 8px;
  background: repeating-linear-gradient(90deg, #6d7f9e 0 1px, #eef2f8 1px 2px);
}
:host([vertical]) .grip { background: repeating-linear-gradient(#6d7f9e 0 1px, #eef2f8 1px 2px); }
.rest { flex: ${v ? 41 : 68}; }
</style>
<span class="split"></span>
<button class="arrow" aria-label="Görgetés vissza"><ui-icon name="${v ? 'triup' : 'trileft'}"></ui-icon></button>
<span class="thumb"><span class="grip"></span></span>
<span class="rest"></span>
<button class="arrow" aria-label="Görgetés előre"><ui-icon name="${v ? 'tri' : 'triright'}"></ui-icon></button>
${v ? '' : '<span class="split"></span>'}`);
  }
}

class SheetTabs extends HTMLElement {
  constructor() {
    super();
    shadow(this, `
<style>
:host {
  display: flex;
  height: 17px;
  padding-right: 16px;
  border-top: 1px solid #8fabd4;
  border-bottom: 1px solid #6b8fbe;
  background: linear-gradient(#8fabd4, #a1bbe0 3px);
}
.nav {
  display: flex;
  align-items: center;
  justify-content: space-around;
  width: 62px;
  padding: 0 2px;
  border-right: 1px solid #8fabd4;
  background: linear-gradient(#dfebfa, #c0d6f2);
}
.nav button, .new { display: block; }
.tab {
  height: 16px;
  margin-top: -1px;
  padding: 0 14px 0 10px;
  clip-path: polygon(0 0, 100% 0, calc(100% - 13px) 100%, 3px 100%);
  background: linear-gradient(#fff 60%, #dceafa);
  font: bold 13px/17px "Noto Sans", sans-serif;
}
.new {
  width: 44px;
  padding-left: 12px;
  margin-left: -14px;
  clip-path: polygon(13px 0, 100% 0, calc(100% - 13px) 100%, 0 100%);
  background: linear-gradient(#e2edfb, #bfd6f3);
}
.space { flex: 1; }
scroll-track { width: 40%; }
</style>
<div class="nav">
  <button aria-label="Első lap"><ui-icon name="first"></ui-icon></button>
  <button aria-label="Előző lap"><ui-icon name="prev"></ui-icon></button>
  <button aria-label="Következő lap"><ui-icon name="next"></ui-icon></button>
  <button aria-label="Utolsó lap"><ui-icon name="last"></ui-icon></button>
</div>
<button class="tab"><slot></slot></button>
<button class="new" aria-label="Munkalap beszúrása"><ui-icon name="newsheet"></ui-icon></button>
<span class="space"></span>
<scroll-track></scroll-track>`);
  }
}

class StatusBar extends HTMLElement {
  constructor() {
    super();
    shadow(this, `
<style>
:host {
  display: flex;
  height: 22px;
  border-bottom: 2px solid #222;
  background: linear-gradient(#dbe8fb, #cbdffa 6px, #b0cdf3 7px, #c5dcf8 15px, #d2e5fb);
}
.state, .rec {
  display: flex;
  align-items: center;
  border-right: 1px solid #8fb1de;
  box-shadow: 1px 0 #f0f6fe;
}
.state { width: 38px; padding-left: 7px; }
.rec { width: 34px; padding-left: 9px; }
.space { flex: 1; }
.zoom {
  display: flex;
  align-items: center;
  gap: 9px;
  padding: 0 5px;
  border-left: 1px solid #6b8fbe;
  background: linear-gradient(#a5c4ee, #8ab2e6 6px, #76a3de 7px, #8db6ea);
}
.views {
  display: flex;
  height: 18px;
  border: 1px solid #8fb1de;
  background: linear-gradient(#d7e6fa, #b8d2f3);
}
.views button {
  display: flex;
  align-items: center;
  justify-content: center;
  width: 18px;
}
.views .on { background: linear-gradient(#fbcf8c, #fdbb4e 50%, #fee69a); }
.slide { display: flex; align-items: center; }
.slide button { display: block; }
input {
  width: 102px;
  height: 16px;
  background: linear-gradient(#5578a8, #5578a8) center / 100% 1px no-repeat;
}
input::-webkit-slider-thumb {
  appearance: none;
  width: 9px;
  height: 13px;
  border: 1px solid #4c6fa5;
  border-radius: 1px 1px 4px 4px;
  background: #eaf2fd;
}
</style>
<span class="state"><slot></slot></span>
<span class="rec"><button aria-label="Makrórögzítés"><ui-icon name="macro"></ui-icon></button></span>
<span class="space"></span>
<div class="zoom">
  <div class="views">
    <button class="on" aria-label="Normál nézet"><ui-icon name="vnormal"></ui-icon></button>
    <button aria-label="Lapelrendezés"><ui-icon name="vlayout"></ui-icon></button>
    <button aria-label="Oldaltörés megtekintése"><ui-icon name="vbreak"></ui-icon></button>
  </div>
  <span>100%</span>
  <div class="slide">
    <button aria-label="Kicsinyítés"><ui-icon name="minus"></ui-icon></button>
    <input type="range" min="0" max="200" value="100" aria-label="Nagyítás">
    <button aria-label="Nagyítás"><ui-icon name="plus"></ui-icon></button>
  </div>
</div>`);
  }
}

customElements.define('ui-icon', UiIcon);
customElements.define('ribbon-group', RibbonGroup);
customElements.define('ribbon-large', RibbonLarge);
customElements.define('ribbon-small', RibbonSmall);
customElements.define('ribbon-select', RibbonSelect);
customElements.define('tool-strip', ToolStrip);
customElements.define('style-gallery', StyleGallery);
customElements.define('scroll-track', ScrollTrack);
customElements.define('title-bar', TitleBar);
customElements.define('ribbon-tabs', RibbonTabs);
customElements.define('ribbon-bar', RibbonBar);
customElements.define('formula-bar', FormulaBar);
customElements.define('sheet-grid', SheetGrid);
customElements.define('sheet-tabs', SheetTabs);
customElements.define('status-bar', StatusBar);
customElements.define('excel-window', ExcelWindow);
</script>
</body>
</html>
